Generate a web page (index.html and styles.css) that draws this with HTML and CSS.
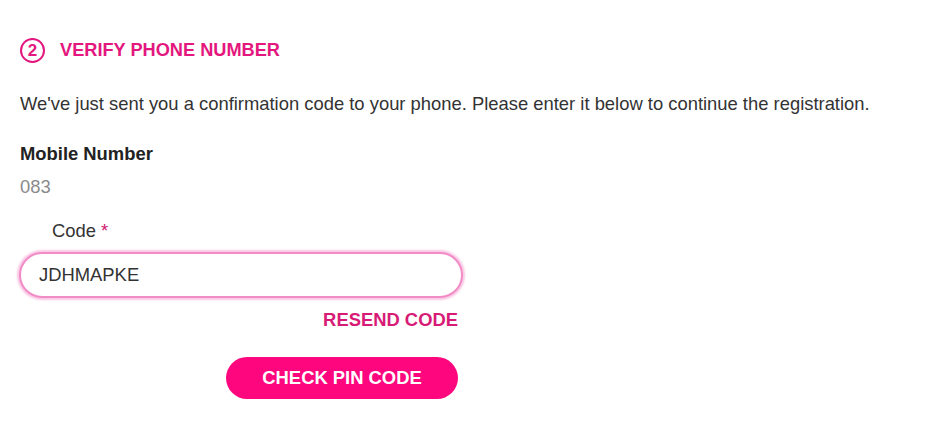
FILE: index.html
```html
<!DOCTYPE html>
<html lang="en">
<head>
<meta charset="utf-8">
<title>Verify phone number</title>
<link rel="stylesheet" href="styles.css">
</head>
<body>
<main class="page">
  <header class="step">
    <span class="step-num">2</span>
    <h1 class="step-title">VERIFY PHONE NUMBER</h1>
  </header>
  <p class="intro">We've just sent you a confirmation code to your phone. Please enter it below to continue the registration.</p>
  <div class="info">
    <div class="info-label">Mobile Number</div>
    <div class="info-value">083</div>
  </div>
  <form class="form">
    <label class="field-label" for="code">Code <span class="req">*</span></label>
    <input class="field-input" id="code" type="text" value="JDHMAPKE">
    <div class="resend-row"><a class="resend" href="#">RESEND CODE</a></div>
    <div class="submit-row"><button class="submit" type="button">CHECK PIN CODE</button></div>
  </form>
</main>
</body>
</html>
```
FILE: styles.css
```css
* { box-sizing: border-box; }
html, body { margin: 0; padding: 0; background: #fff; }
body {
  font-family: "Liberation Sans", Arial, Helvetica, sans-serif;
  color: #333;
  font-size: 18.4px;
}
.page {
  padding: 38px 20px 0 20px;
}
.step {
  display: flex;
  align-items: center;
  gap: 15px;
  height: 25px;
}
.step-num {
  width: 25px;
  height: 25px;
  border: 2px solid #e3177e;
  border-radius: 50%;
  display: flex;
  align-items: center;
  justify-content: center;
  color: #e3177e;
  font-weight: 700;
  font-size: 17px;
}
.step-title {
  margin: 0;
  font-size: 18.2px;
  font-weight: 700;
  color: #e3177e;
}
.intro {
  margin: 30px 0 0 0;
  line-height: 22px;
  color: #333;
}
.info { margin-top: 28px; }
.info-label {
  font-weight: 700;
  line-height: 22px;
  color: #222;
}
.info-value {
  margin-top: 11px;
  line-height: 22px;
  color: #8a8a8a;
}
.form {
  width: 444px;
  margin-left: -1px;
  margin-top: 22px;
}
.field-label {
  display: block;
  padding-left: 33px;
  line-height: 22px;
  color: #333;
}
.req { color: #d0186f; }
.field-input {
  display: block;
  width: 100%;
  height: 46px;
  margin-top: 10px;
  padding: 0 18px;
  border: 2px solid #f28cc6;
  border-radius: 23px;
  box-shadow: 0 0 2px 2px rgba(245, 160, 210, 0.6);
  font-family: inherit;
  font-size: 18.4px;
  color: #333;
  outline: none;
  background: #fff;
}
.resend-row {
  display: flex;
  justify-content: flex-end;
  padding-right: 5px;
  margin-top: 11px;
}
.resend {
  font-weight: 700;
  line-height: 22px;
  color: #d81a77;
  text-decoration: none;
}
.submit-row {
  display: flex;
  justify-content: flex-end;
  padding-right: 5px;
  margin-top: 26px;
}
.submit {
  width: 232px;
  height: 42px;
  border: none;
  border-radius: 21px;
  background: #fe067e;
  color: #fff;
  font-family: inherit;
  font-size: 18.4px;
  font-weight: 700;
  cursor: pointer;
}
```
